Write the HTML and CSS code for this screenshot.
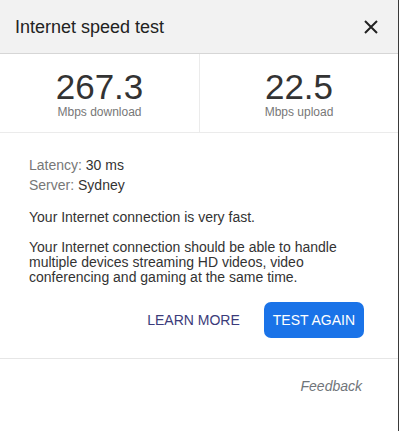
FILE: index.html
```html
<!DOCTYPE html>
<html lang="en">
<head>
    <meta charset="UTF-8">
    <meta name="viewport" content="width=device-width, initial-scale=1.0">
    <title>Internet speed test</title>
    <link rel="stylesheet" href="styles.css">
</head>
<body>
    <div class="panel">
        <div class="header">
            <span class="title">Internet speed test</span>
            <button class="close-btn" aria-label="Close">
                <svg width="14" height="14" viewBox="0 0 14 14">
                    <path d="M1 1 L13 13 M13 1 L1 13" stroke="#222" stroke-width="2" fill="none"/>
                </svg>
            </button>
        </div>

        <div class="stats">
            <div class="stat">
                <div class="stat-value">267.3</div>
                <div class="stat-label">Mbps download</div>
            </div>
            <div class="stat">
                <div class="stat-value">22.5</div>
                <div class="stat-label">Mbps upload</div>
            </div>
        </div>

        <div class="details">
            <div class="meta">
                <div><span class="meta-key">Latency:</span> 30 ms</div>
                <div><span class="meta-key">Server:</span> Sydney</div>
            </div>
            <p class="verdict">Your Internet connection is very fast.</p>
            <p class="explain">Your Internet connection should be able to handle multiple devices streaming HD videos, video conferencing and gaming at the same time.</p>

            <div class="actions">
                <button class="link-btn">LEARN MORE</button>
                <button class="primary-btn">TEST AGAIN</button>
            </div>
        </div>

        <div class="footer">
            <a class="feedback" href="#">Feedback</a>
        </div>
    </div>
</body>
</html>
```

FILE: styles.css
```css
body {
    margin: 0;
    font-family: 'Liberation Sans', Arial, sans-serif;
    background: white;
    color: #333;
}

.panel {
    width: 398px;
    height: 431px;
    border-right: 1px solid #3a3a3a;
    background: white;
}

.header {
    height: 53px;
    display: flex;
    align-items: center;
    justify-content: space-between;
    padding: 0 20px 0 15px;
    background: #f2f2f2;
    border-bottom: 1px solid #d6d6d6;
}

.title {
    font-size: 18px;
    line-height: 20px;
    color: #222;
}

.close-btn {
    background: none;
    border: none;
    padding: 0;
    width: 14px;
    height: 14px;
    display: flex;
    cursor: pointer;
}

.stats {
    display: grid;
    grid-template-columns: 199px 1fr;
    border-bottom: 1px solid #ebebeb;
}

.stat {
    text-align: center;
    padding: 15px 0 13px;
}

.stat + .stat {
    border-left: 1px solid #ebebeb;
}

.stat-value {
    font-size: 35px;
    line-height: 36px;
    color: #333;
}

.stat-label {
    font-size: 12px;
    line-height: 14px;
    color: #777;
}

.details {
    padding: 22px 34px 20px 29px;
    border-bottom: 1px solid #e6e6e6;
    font-size: 14px;
}

.meta {
    line-height: 20px;
    color: #333;
}

.meta-key {
    color: #777;
}

.verdict {
    margin: 12px 0 0;
    line-height: 20px;
}

.explain {
    margin: 13px 0 0;
    line-height: 15px;
}

.actions {
    display: flex;
    justify-content: flex-end;
    align-items: center;
    gap: 12px;
    margin-top: 17px;
}

.link-btn {
    background: none;
    border: none;
    font-family: inherit;
    font-size: 14px;
    color: #3b3b7a;
    padding: 0 12px;
    height: 36px;
    white-space: nowrap;
    cursor: pointer;
}

.primary-btn {
    background: #1a73e8;
    border: none;
    border-radius: 7px;
    font-family: inherit;
    font-size: 14px;
    color: white;
    padding: 0 9px;
    height: 36px;
    white-space: nowrap;
    cursor: pointer;
}

.footer {
    text-align: right;
    padding: 18px 36px 0 0;
}

.feedback {
    font-size: 14px;
    font-style: italic;
    color: #70757a;
    text-decoration: none;
}
```
